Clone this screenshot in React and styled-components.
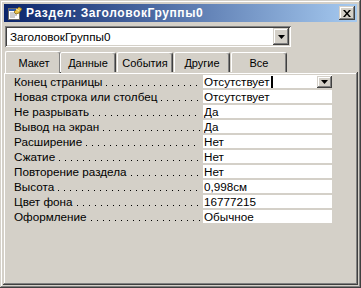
import styled, { createGlobalStyle } from "styled-components";

const GlobalStyle = createGlobalStyle`
    html, body {
        margin: 0;
        padding: 0;
        background: #d4d0c8;
    }
    body {
        font-family: "Liberation Sans", Arial, sans-serif;
        font-size: 11.7px;
        color: #000;
    }
`;

const rows = [
    { label: "Конец страницы", value: "Отсутствует", active: true },
    { label: "Новая строка или столбец", value: "Отсутствует" },
    { label: "Не разрывать", value: "Да" },
    { label: "Вывод на экран", value: "Да" },
    { label: "Расширение", value: "Нет" },
    { label: "Сжатие", value: "Нет" },
    { label: "Повторение раздела", value: "Нет" },
    { label: "Высота", value: "0,998см" },
    { label: "Цвет фона", value: "16777215" },
    { label: "Оформление", value: "Обычное" },
];

const tabs = ["Макет", "Данные", "События", "Другие", "Все"];

const raised = `
    box-shadow: inset -1px -1px #404040, inset 1px 1px #d4d0c8,
        inset -2px -2px #808080, inset 2px 2px #ffffff;
`;

const sunken = `
    box-shadow: inset 1px 1px #808080, inset -1px -1px #ffffff,
        inset 2px 2px #404040, inset -2px -2px #d4d0c8;
`;

const Window = styled.div`
    width: 361px;
    height: 288px;
    box-sizing: border-box;
    padding: 2px;
    background: #d4d0c8;
    display: flex;
    flex-direction: column;
    ${raised}
`;

const TitleBar = styled.div`
    height: 18px;
    margin: 2px 2px 0 2px;
    padding: 0 2px 0 3px;
    display: flex;
    align-items: center;
    gap: 3px;
    background: linear-gradient(to right, #0a246a, #a6caf0);
`;

const TitleText = styled.span`
    color: #ffffff;
    font-weight: bold;
    font-size: 12px;
    letter-spacing: 0.6px;
    white-space: nowrap;
`;

const CloseButton = styled.div`
    margin-left: auto;
    width: 16px;
    height: 14px;
    background: #d4d0c8;
    display: flex;
    align-items: center;
    justify-content: center;
    ${raised}
`;

const Combo = styled.div`
    margin: 4px 0 0 3px;
    width: 286px;
    height: 21px;
    box-sizing: border-box;
    background: #ffffff;
    padding: 2px;
    display: flex;
    align-items: center;
    ${sunken}
`;

const ComboText = styled.span`
    flex: 1;
    padding-left: 3px;
`;

const DropButton = styled.div`
    width: ${(p) => p.$w}px;
    height: ${(p) => p.$h}px;
    flex: none;
    background: #d4d0c8;
    display: flex;
    align-items: center;
    justify-content: center;
    ${raised}
`;

const TabList = styled.div`
    margin: 5px 0 0 5px;
    height: 20px;
    display: flex;
    align-items: flex-end;
    position: relative;
    z-index: 1;
`;

const Tab = styled.div`
    width: 56px;
    height: ${(p) => (p.$active ? 22 : 20)}px;
    margin-left: ${(p) => (p.$active ? -2 : 0)}px;
    margin-right: ${(p) => (p.$active ? -1 : 1)}px;
    margin-bottom: ${(p) => (p.$active ? -1 : 0)}px;
    padding-left: ${(p) => (p.$active ? 2 : 0)}px;
    box-sizing: border-box;
    display: flex;
    align-items: center;
    justify-content: center;
    background: #d4d0c8;
    border-top-left-radius: 2px;
    border-top-right-radius: 3px;
    border-top: 1px solid #ffffff;
    border-left: 1px solid #ffffff;
    border-right: 1px solid #404040;
    box-shadow: inset -1px 0 #808080;
    font-size: 11px;
`;

const Panel = styled.div`
    flex: 1;
    margin: 0 1px 1px 1px;
    padding: 3px 0 0 11px;
    display: flex;
    flex-direction: column;
    gap: 2px;
    ${raised}
`;

const Row = styled.div`
    height: 13px;
    display: flex;
    align-items: center;
`;

const Label = styled.span`
    width: 186px;
    flex: none;
    display: flex;
    align-items: center;
    overflow: hidden;
    white-space: nowrap;
`;

const Leader = styled.span`
    flex: 1;
    height: 13px;
    margin: 0 0 0 4px;
    background-image: linear-gradient(to right, #000 0 1px, transparent 1px 6px);
    background-size: 6px 1px;
    background-repeat: repeat-x;
    background-position: left bottom 2px;
`;

const Value = styled.div`
    margin-left: 3px;
    width: 129px;
    height: 13px;
    background: #ffffff;
    display: flex;
    align-items: center;
    padding-left: 1px;
    box-sizing: border-box;
`;

const Caret = styled.span`
    width: 2px;
    height: 12px;
    margin-left: 1px;
    background: #000;
`;

const Spacer = styled.span`
    flex: 1;
`;

const Arrow = () => (
    <svg width="7" height="4" viewBox="0 0 7 4">
        <path d="M0 0h7L3.5 4z" fill="#000" />
    </svg>
);

const TitleIcon = () => (
    <svg width="16" height="16" viewBox="0 0 16 16">
        <rect x="1.5" y="3.5" width="11" height="11" fill="#fff" stroke="#6b6b6b" />
        <rect x="2" y="4" width="10" height="2" fill="#2a5ab0" />
        <path d="M3 8h7M3 10h7M3 12h5" stroke="#9a9a9a" />
        <path d="M7 7l5-5 3 2-3 4-3 1z" fill="#e8c24a" stroke="#8a6a10" strokeWidth="0.8" />
        <path d="M9 4l3 2" stroke="#fff3b0" />
    </svg>
);

const CloseIcon = () => (
    <svg width="8" height="7" viewBox="0 0 8 7">
        <path d="M0 0h2l2 2.5 2-2.5h2L5 3.5 8 7H6L4 4.5 2 7H0l3-3.5z" fill="#000" />
    </svg>
);

const App = () => {
    return (
        <>
            <GlobalStyle />
            <Window>
                <TitleBar>
                    <TitleIcon />
                    <TitleText>Раздел: ЗаголовокГруппы0</TitleText>
                    <CloseButton>
                        <CloseIcon />
                    </CloseButton>
                </TitleBar>
                <Combo>
                    <ComboText>ЗаголовокГруппы0</ComboText>
                    <DropButton $w={16} $h={17}>
                        <Arrow />
                    </DropButton>
                </Combo>
                <TabList>
                    {tabs.map((t, i) => (
                        <Tab key={t} $active={i === 0}>{t}</Tab>
                    ))}
                </TabList>
                <Panel>
                    {rows.map((r) => (
                        <Row key={r.label}>
                            <Label>
                                {r.label}
                                <Leader />
                            </Label>
                            <Value>
                                {r.value}
                                {r.active && (
                                    <>
                                        <Caret />
                                        <Spacer />
                                        <DropButton $w={15} $h={12}>
                                            <Arrow />
                                        </DropButton>
                                    </>
                                )}
                            </Value>
                        </Row>
                    ))}
                </Panel>
            </Window>
        </>
    );
};

export default App;
